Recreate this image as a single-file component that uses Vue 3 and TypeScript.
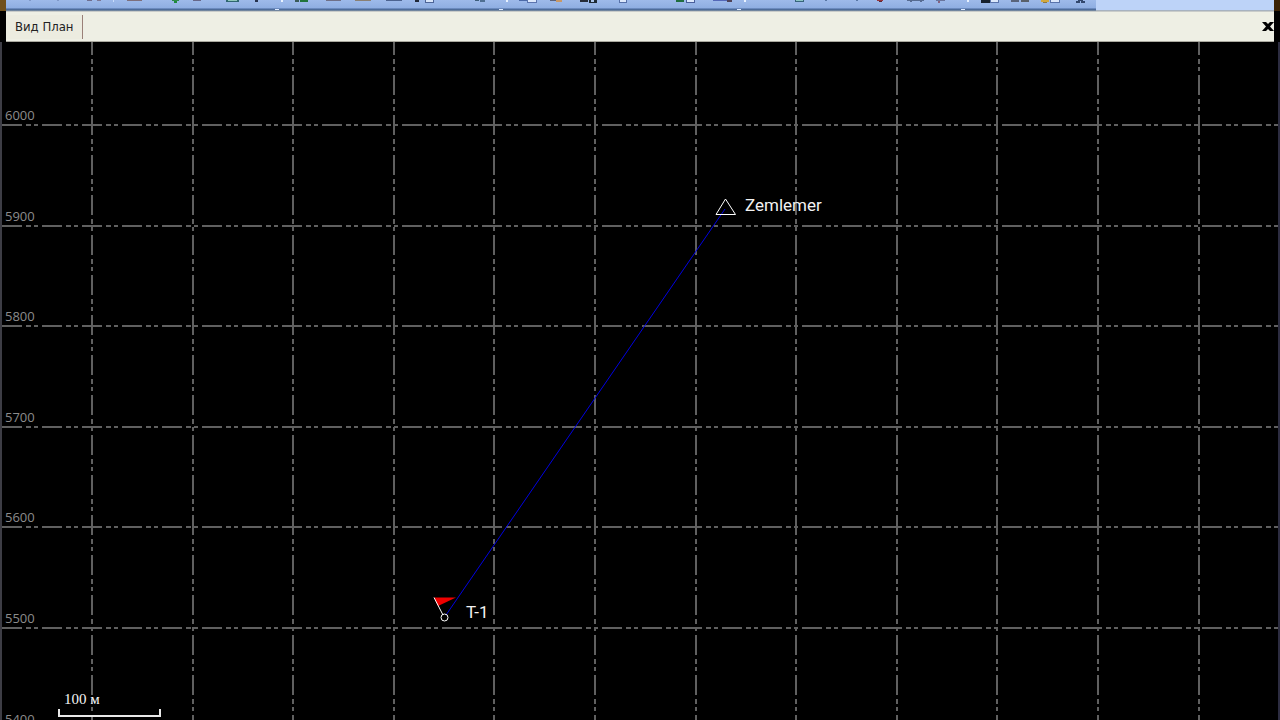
<script setup lang="ts">
import { computed, onBeforeUnmount, onMounted, ref } from 'vue'

interface Mark { x: number; y: number; w: number; h: number; color: string }
interface GridRow { label: string; y: number }

const canvas = ref<SVGSVGElement | null>(null)
const width = ref(0)
const height = ref(0)

function measure(): void {
  if (!canvas.value) return
  const box = canvas.value.getBoundingClientRect()
  width.value = box.width
  height.value = box.height
}

onMounted(() => {
  measure()
  window.addEventListener('resize', measure)
})
onBeforeUnmount(() => window.removeEventListener('resize', measure))

const step = 100.6
const columns = computed<number[]>(() =>
  Array.from({ length: Math.max(0, Math.ceil((width.value - 92) / step)) }, (_, i) => Math.round(92 + i * step)),
)
const rows = computed<GridRow[]>(() =>
  Array.from({ length: Math.max(0, Math.ceil((height.value - 68) / step)) }, (_, i) => ({
    label: String(6000 - i * 100),
    y: Math.round(83 + i * step),
  })),
)

const m = (x: number, y: number, w: number, h: number, color: string): Mark => ({ x, y, w, h, color })

const marks: Mark[] = [
  m(29, 0, 2, 1, '#7f98c8'), m(57, 0, 2, 1, '#7f98c8'),
  m(87, 0, 5, 1, '#6f6f90'), m(97, 0, 4, 1, '#7c7896'), m(113, 0, 1, 2, '#c9dcfa'),
  m(127, 0, 15, 1, '#7d6f7c'), m(172, 0, 7, 1, '#2e8a4b'), m(174, 1, 3, 2, '#1f8a3a'),
  m(193, 0, 8, 1, '#66678a'), m(226, 0, 13, 2, '#2f6670'), m(228, 0, 9, 1, '#8fc7b9'),
  m(255, 0, 3, 2, '#27334f'), m(281, 0, 2, 2, '#e8f2ff'), m(295, 0, 4, 2, '#3a5a58'), m(300, 0, 8, 2, '#21743a'),
  m(326, 0, 15, 1, '#6f7088'), m(355, 0, 16, 1, '#8a8074'), m(386, 0, 16, 1, '#4c6390'),
  m(415, 0, 4, 2, '#202838'), m(425, 0, 9, 3, '#4e6597'), m(426, 0, 7, 2, '#d8e5fa'),
  m(475, 0, 4, 1, '#3d5e7c'), m(480, 0, 5, 2, '#4f6f92'), m(506, 0, 2, 2, '#e8f2ff'),
  m(519, 0, 10, 1, '#4c6aa8'), m(527, 0, 10, 3, '#5c74ae'), m(528, 0, 8, 2, '#dce8fb'),
  m(550, 0, 8, 1, '#5d647c'), m(556, 0, 6, 2, '#c99967'), m(580, 0, 8, 2, '#262c38'), m(589, 0, 8, 3, '#1e2a34'), m(591, 0, 3, 2, '#aac3e9'),
  m(619, 0, 8, 3, '#5670a8'), m(620, 0, 6, 2, '#dce8fb'),
  m(676, 0, 8, 2, '#1f6d3e'), m(686, 0, 9, 3, '#4a5f9b'), m(687, 0, 7, 2, '#dce8fb'),
  m(713, 0, 17, 1, '#5468b8'), m(727, 0, 5, 2, '#4f4358'), m(744, 0, 2, 2, '#e8f2ff'),
  m(795, 0, 9, 2, '#37647b'), m(796, 0, 7, 1, '#8cc4c4'), m(825, 0, 2, 1, '#5877a5'), m(856, 0, 2, 1, '#5877a5'),
  m(877, 0, 6, 1, '#93343c'), m(879, 1, 3, 1, '#5e2630'), m(907, 0, 17, 1, '#566b91'), m(910, 1, 2, 1, '#566b91'), m(920, 1, 2, 1, '#566b91'),
  m(936, 0, 9, 1, '#69759d'), m(938, 1, 2, 2, '#85627f'), m(967, 0, 2, 2, '#e8f2ff'),
  m(981, 0, 9, 3, '#16202c'), m(990, 0, 9, 3, '#5a74ab'), m(991, 0, 7, 2, '#dce8fb'),
  m(1011, 0, 8, 2, '#59637a'), m(1021, 0, 8, 2, '#59606a'), m(1041, 0, 8, 2, '#d2a83d'), m(1043, 2, 4, 1, '#8b7644'),
  m(1050, 0, 10, 3, '#5a74ab'), m(1051, 0, 8, 2, '#dce8fb'),
  m(1078, 0, 5, 1, '#33486d'), m(1076, 1, 4, 2, '#33486d'), m(1081, 1, 4, 2, '#33486d'),
  m(275, 9, 4, 1, '#dce9ff'), m(499, 9, 4, 1, '#dce9ff'), m(737, 9, 4, 1, '#dce9ff'), m(961, 9, 4, 1, '#dce9ff'),
]
</script>

<template>
  <div class="window">
    <header class="toolbar">
      <div class="tools">
        <svg class="marks" aria-hidden="true">
          <rect v-for="(k, i) in marks" :key="i" :x="k.x - 6" :y="k.y" :width="k.w" :height="k.h" :fill="k.color" />
        </svg>
      </div>
      <div class="spare"></div>
    </header>
    <nav class="tabs">
      <button class="tab" type="button">Вид План</button>
      <button class="close" type="button" aria-label="Закрыть">
        <svg width="12" height="10" viewBox="0 0 12 10" aria-hidden="true">
          <path d="M0 0h4l2 2 2-2h4L8 4.500 12 9H8L6 7 4 9H0l4-4.500z" />
        </svg>
      </button>
    </nav>
    <main class="plan">
      <svg ref="canvas" class="canvas" role="img" aria-label="План">
        <g class="grid">
          <line v-for="x in columns" :key="'c' + x" :x1="x" y1="-7" :x2="x" y2="100%" />
          <line v-for="r in rows" :key="r.label" x1="2" :y1="r.y" x2="100%" :y2="r.y" />
        </g>
        <g class="coords">
          <text v-for="r in rows" :key="r.label" x="5" :y="r.y - 5">{{ r.label }}</text>
        </g>
        <line class="ray" x1="446" y1="573" x2="725" y2="167" />
        <path class="station" d="M716 172.500L725.500 157 735.500 172.500z" />
        <path class="flag" d="M434 555.500H456L438 564z" />
        <path class="station" d="M434 555.500L443 573" />
        <circle class="station" cx="444.500" cy="575.500" r="3.500" />
        <text class="name" x="745" y="169">Zemlemer</text>
        <text class="name" x="466" y="576">T-1</text>
      </svg>
      <div class="scale">
        <span class="distance">100 м</span>
        <div class="ruler"></div>
      </div>
    </main>
  </div>
</template>

<style>
body { margin: 0; background: #000; }
</style>

<style scoped>
.window {
  display: flex;
  flex-direction: column;
  height: 100vh;
  overflow: hidden;
  background: #000;
}
.toolbar {
  display: flex;
  flex: none;
  height: 11px;
  box-sizing: border-box;
  border-left: 6px solid #70501c;
  border-right: 6px solid #3b2205;
  background: #bdd3f8;
}
.tools {
  flex: 49;
  height: 11px;
  background: linear-gradient(#9ebaea 0, #8faee2 8px, #47679b 9px, #557198 10px, #8c9aa5 11px);
}
.spare {
  flex: 8;
  box-sizing: border-box;
  border-bottom: 1px solid #a7b2bf;
}
.marks { display: block; width: 100%; height: 11px; }
.tabs {
  display: flex;
  flex: none;
  align-items: center;
  height: 31px;
  box-sizing: border-box;
  margin: 0 6px;
  border-top: 1px solid #c9ccc9;
  border-bottom: 1px solid #aaa99f;
  background: #eeefe4;
}
.tab {
  height: 24px;
  padding: 0 8px 0 9px;
  border: 0;
  border-right: 1px solid #9a8078;
  background: #ecece0;
  color: #222;
  font: 13px/24px "DejaVu Sans Condensed", "DejaVu Sans", sans-serif;
}
.close {
  display: flex;
  margin-left: auto;
  padding: 0;
  border: 0;
  background: none;
}
.plan {
  position: relative;
  flex: 1;
  min-height: 0;
  box-sizing: border-box;
  border-left: 2px solid #3d3d45;
  border-right: 2px solid #2c2c40;
}
.canvas {
  display: block;
  width: calc(100% + 2px);
  height: 100%;
  margin-left: -2px;
}
.grid line {
  stroke: #606060;
  stroke-width: 2;
  stroke-dasharray: 20 4 5 3 4 4;
}
.coords text {
  fill: #8c8c8c;
  font: 13px "Open Sans", sans-serif;
}
.ray { stroke: #0000e0; stroke-width: 1; }
.station { fill: none; stroke: #fff; stroke-width: 1; }
.flag { fill: #f00000; }
.name {
  fill: #f2f2f2;
  font: 17px Roboto, sans-serif;
}
.scale {
  position: absolute;
  left: 56px;
  bottom: 3px;
  width: 103px;
}
.distance {
  display: block;
  padding-left: 6px;
  color: #f4f4f4;
  font: 15px/20px "Liberation Serif", "Times New Roman", serif;
}
.ruler {
  height: 8px;
  box-sizing: border-box;
  border: 2px solid #e8e8e8;
  border-top: 0;
}
</style>
